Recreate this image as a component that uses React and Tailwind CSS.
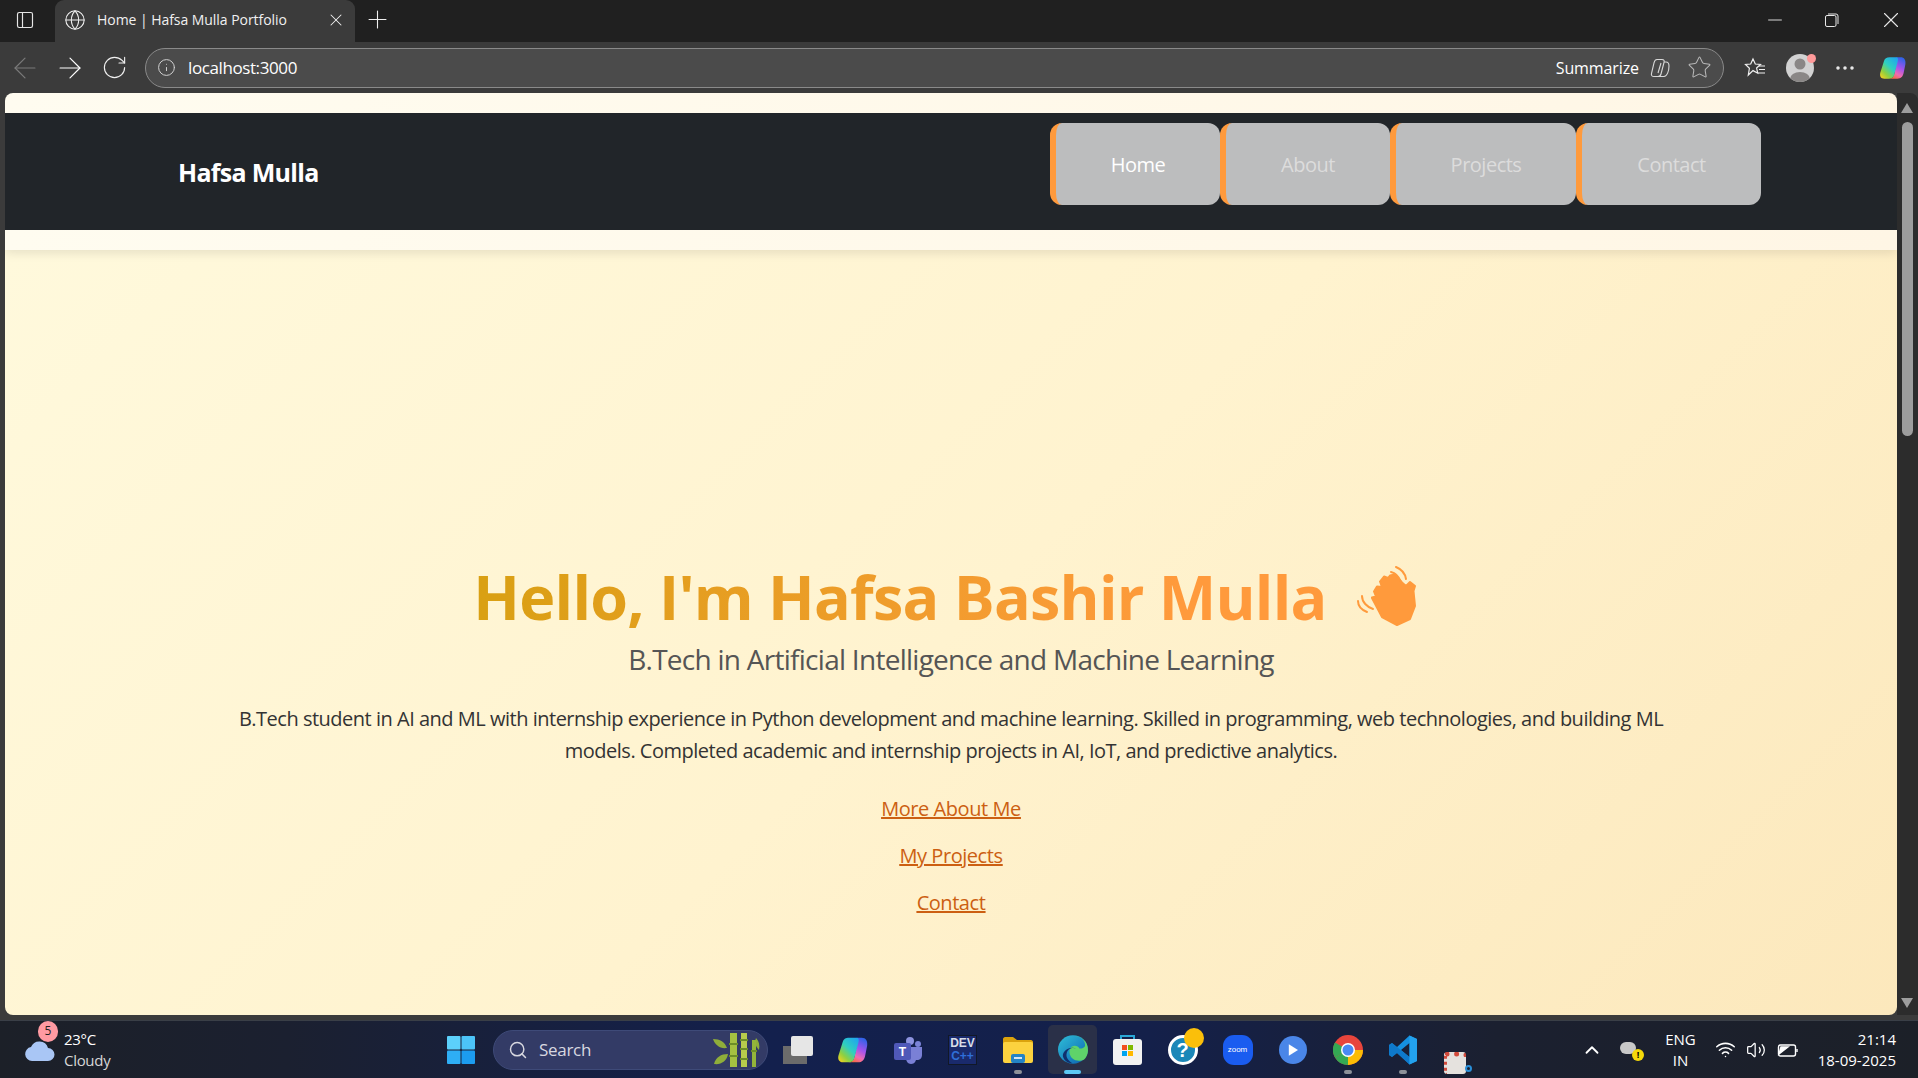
import React from 'react';
import { ArrowLeft, ArrowRight, RotateCw, Info, Globe, X, Plus, Minus, Star, MoreHorizontal, PanelLeft, Search, ChevronUp, Wifi, Volume2 } from 'lucide-react';

const navItems = [
  { label: 'Home', width: 'w-[170px]', text: 'text-white' },
  { label: 'About', width: 'w-[170px]', text: 'text-[#dcdcdc]' },
  { label: 'Projects', width: 'w-[186px]', text: 'text-[#dcdcdc]' },
  { label: 'Contact', width: 'w-[185px]', text: 'text-[#dcdcdc]' },
];

const CopilotIcon = ({ size = 26, id = 'cp' }) => (
  <svg width={size} height={size} viewBox="0 0 26 26">
    <defs>
      <linearGradient id={`${id}a`} x1="0.9" y1="0" x2="0.1" y2="1">
        <stop offset="0" stopColor="#1fa4f0" />
        <stop offset="0.45" stopColor="#2fd0c0" />
        <stop offset="0.75" stopColor="#8fd040" />
        <stop offset="1" stopColor="#f5d020" />
      </linearGradient>
      <linearGradient id={`${id}b`} x1="0.7" y1="0" x2="0.3" y2="1">
        <stop offset="0" stopColor="#2f63e8" />
        <stop offset="0.45" stopColor="#a553ec" />
        <stop offset="0.75" stopColor="#ef6bb0" />
        <stop offset="1" stopColor="#f76a40" />
      </linearGradient>
    </defs>
    <path d="M16 3h4c3.500 0 5 2.500 4.500 6.500L23 17c-.7 4-2.500 6-6 6H9c3 0 4.500-1.500 5.200-4.500L16.500 7c.3-2-.2-3-.5-4z" fill={`url(#${id}b)`} />
    <path d="M10 3h6c1.500 0 2 1.500 1.500 3.500L14.200 19c-.7 3-2.500 4-5.200 4H5c-3.500 0-4.500-2.500-3.800-5.500L4.500 7C5.200 4 7 3 10 3z" fill={`url(#${id}a)`} />
  </svg>
);

const WinIcon = () => (
  <svg width="30" height="30" viewBox="0 0 30 30">
    <rect x="1" y="1" width="13.500" height="13.500" rx="1" fill="#5cd0fb" />
    <rect x="15.500" y="1" width="13.500" height="13.500" rx="1" fill="#4cc4f8" />
    <rect x="1" y="15.500" width="13.500" height="13.500" rx="1" fill="#2eaef5" />
    <rect x="15.500" y="15.500" width="13.500" height="13.500" rx="1" fill="#1c9cf0" />
  </svg>
);

const Bamboo = () => (
  <svg width="50" height="34" viewBox="0 0 50 34">
    <path d="M1 6c7 0 12 3 14 9-7 1-12-3-14-9zM2 31c2-7 7-10 14-10-1 7-7 11-14 10z" fill="#8fae3a" />
    <path d="M44 5c3 3 4 7 3 12-3-3-5-7-3-12z" fill="#8fae3a" />
    <rect x="18" y="0" width="7" height="34" fill="#a5c241" />
    <rect x="29" y="0" width="6" height="34" fill="#b7cc4c" />
    <rect x="40" y="7" width="4" height="27" fill="#93b53a" />
    <path d="M17 11h9M17 23h9M28 7h8M28 16h8M28 26h8M39 18h6" stroke="#6d8f28" strokeWidth="2" />
  </svg>
);

const Gallery = () => (
  <div className="relative w-[30px] h-[28px]">
    <div className="absolute left-0 bottom-0 w-[24px] h-[18px] bg-[#6b6b6b]" />
    <div className="absolute right-0 top-0 w-[22px] h-[20px] rounded-[2px] bg-[#e6e6e6]" />
  </div>
);

const TeamsIcon = () => (
  <svg width="30" height="30" viewBox="0 0 30 30">
    <circle cx="25" cy="9" r="3" fill="#7b83d8" />
    <circle cx="17" cy="6" r="4" fill="#8d93e0" />
    <path d="M15 12h14v8c0 3-2 5-5 5h-1c-1 3-3 4-5 4-3 0-5-3-5-6z" fill="#7a80d6" />
    <rect x="1" y="8" width="17" height="17" rx="2" fill="#4f58b8" />
    <text x="9.500" y="21" textAnchor="middle" fontSize="12" fontWeight="700" fill="#fff" fontFamily="Liberation Sans, sans-serif">T</text>
  </svg>
);

const DevIcon = () => (
  <div className="flex flex-col items-center justify-center w-[29px] h-[30px] bg-[#1a2a6c] border border-[#111827] font-['Liberation_Sans',sans-serif] font-bold text-[12px] leading-[13px]">
    <span className="text-[#d8dde8]">DEV</span>
    <span className="text-[#2f6fd8]">C++</span>
  </div>
);

const FilesIcon = () => (
  <svg width="30" height="27" viewBox="0 0 30 27">
    <path d="M0 3c0-1 1-2 2-2h8l4 3h14c1 0 2 1 2 2v4H0z" fill="#dba30d" />
    <rect x="0" y="6" width="30" height="21" rx="2" fill="#fcd23f" />
    <rect x="8" y="18" width="14" height="9" rx="2" fill="#2484c6" />
    <rect x="11" y="21" width="8" height="2" fill="#fff" opacity="0.8" />
  </svg>
);

const EdgeIcon = () => (
  <svg width="30" height="31" viewBox="0 0 31 34" preserveAspectRatio="none">
    <defs>
      <linearGradient id="edg" x1="0" y1="0" x2="1" y2="1">
        <stop offset="0" stopColor="#2fbfd8" />
        <stop offset="1" stopColor="#0b5fb0" />
      </linearGradient>
    </defs>
    <circle cx="15.500" cy="17" r="15.500" fill="url(#edg)" />
    <path d="M31 18c0-9-6-16-15-16 6 0 12 4 12 10 0 3-3 4-6 4-1-3-5-4-8-2-3 3-3 9 1 13 3 3 9 3 12 1 2-2 4-6 4-10z" fill="#5fd36a" />
    <path d="M19 16c-4-2-9 0-10 5-1 4 1 8 6 11-5 0-9-3-10-8 0-6 7-11 14-8z" fill="#10306e" />
  </svg>
);

const StoreIcon = () => (
  <svg width="29" height="31" viewBox="0 0 29 31">
    <path d="M8 7V2h13v5" fill="none" stroke="#2aa8d8" strokeWidth="2" />
    <rect x="0" y="5" width="29" height="26" rx="3" fill="#f2f2f2" />
    <rect x="9" y="11" width="5" height="5" fill="#f25022" />
    <rect x="15" y="11" width="5" height="5" fill="#7fba00" />
    <rect x="9" y="17" width="5" height="5" fill="#00a4ef" />
    <rect x="15" y="17" width="5" height="5" fill="#ffb900" />
  </svg>
);

const HelpIcon = () => (
  <div className="relative w-[30px] h-[30px]">
    <div className="flex items-center justify-center w-[30px] h-[30px] rounded-full border-[3px] border-white bg-[#1b87b8] text-white font-bold text-[20px] leading-none font-['Liberation_Sans',sans-serif]">?</div>
    <div className="absolute right-[-6px] top-[-7px] w-[20px] h-[20px] rounded-full bg-[#fbbf0a]" />
  </div>
);

const ZoomIcon = () => (
  <div className="flex items-center justify-center w-[30px] h-[30px] rounded-[11px] bg-[#1a5cf0] text-white text-[8px] font-['Liberation_Sans',sans-serif]">zoom</div>
);

const PlayIcon = () => (
  <div className="flex items-center justify-center w-[28px] h-[28px] rounded-full bg-[#4a86e8]">
    <svg width="10" height="12" viewBox="0 0 12 14"><path d="M1 0l11 7-11 7z" fill="#fff" /></svg>
  </div>
);

const ChromeIcon = () => (
  <svg width="30" height="30" viewBox="0 0 30 30">
    <circle cx="15" cy="15" r="15" fill="#e8453c" />
    <path d="M15 15L2 22.500A15 15 0 0 1 2 7.500z" fill="#34a853" />
    <path d="M15 15l-13 7.500A15 15 0 0 0 15 30z" fill="#34a853" />
    <path d="M15 15h15A15 15 0 0 1 15 30z" fill="#fbbc05" />
    <circle cx="15" cy="15" r="7" fill="#fff" />
    <circle cx="15" cy="15" r="5.500" fill="#4a8af4" />
  </svg>
);

const VsCodeIcon = () => (
  <svg width="30" height="30" viewBox="0 0 30 30">
    <path fillRule="evenodd" d="M21.500.500L29 4v22l-7.500 3.500L9 18l-5 4-3-2v-10l3-2 5 4zM21.500 8L13 15l8.500 7z" fill="#1590e0" />
    <path d="M4 8L21.500 22v7.500L9 18l-5 4-3-2v-10z" fill="#0c72c4" opacity="0.75" />
    <path d="M21.500.500L29 4v22l-7.500 3.500z" fill="#23a2ee" />
  </svg>
);

const SnipIcon = () => (
  <div className="relative w-[28px] h-[22px] mt-[26px]">
    <div className="w-[22px] h-[22px] rounded-[3px] bg-[#e5e2de] border-t-[5px] border-l-[3px] border-dotted border-[#d24b3c]" />
    <div className="absolute right-0 bottom-[2px] w-[7px] h-[7px] rounded-full border-2 border-[#2a8fd8]" />
  </div>
);

const HandIcon = () => (
  <svg width="60" height="60" viewBox="0 0 60 60" fill="none">
    <path d="M15 32l10 19 15 8 13-6 5-13-1.500-15 1.500-5-5-4-4 4-4-3.500-7-8-5 1-2 2.500-4-1.500-4 5 2 5.500-5-.5-3 5 2 5-4 1z" fill="#ff9a3c" stroke="#ff9a3c" strokeWidth="2" strokeLinejoin="round" />
    <path d="M39 1c5 2 9 6 10 12M34 6c5 1 8 5 10 10" stroke="#ff9a3c" strokeWidth="2" strokeLinecap="round" />
    <path d="M1 35c0 5 4 9 9 11M5 30c0 6 5 11 11 13" stroke="#ff9a3c" strokeWidth="2" strokeLinecap="round" />
  </svg>
);

const taskIcons = [
  { icon: <Gallery />, dot: false },
  { icon: <CopilotIcon size={32} id="cpt" />, dot: false },
  { icon: <TeamsIcon />, dot: false },
  { icon: <DevIcon />, dot: false },
  { icon: <FilesIcon />, dot: true },
  { icon: <EdgeIcon />, dot: true, active: true },
  { icon: <StoreIcon />, dot: false },
  { icon: <HelpIcon />, dot: false },
  { icon: <ZoomIcon />, dot: false },
  { icon: <PlayIcon />, dot: false },
  { icon: <ChromeIcon />, dot: true },
  { icon: <VsCodeIcon />, dot: true },
  { icon: <SnipIcon />, dot: false },
];

const CopilotOutline = () => (
  <svg width="20" height="20" viewBox="0 0 20 20" fill="none" stroke="#d8d8d8" strokeWidth="1.100">
    <path d="M7 1.500h5c2 0 2.500 1 2 3L11 16c-.5 2-1.500 2.500-3 2.500H4c-2 0-3-1-2.500-3L4 5c.5-2.500 1.500-3.500 3-3.500z" />
    <path d="M14 4h2c2 0 3 1.500 3 4 0 5-2 10.500-5 10.500H8" />
    <path d="M11 5L8 15" />
  </svg>
);

const FavIcon = () => (
  <svg width="22" height="22" viewBox="0 0 22 22" fill="none" stroke="#f0f0f0" strokeWidth="1.200" className="ml-[20px]">
    <path d="M9 2l2.300 5 5.200.5-3.900 3.500 1.100 5.200L9 13.600 4.300 18l1.100-6.700L1.500 7.500l5.200-.5z" />
    <path d="M15 9h6M15 12.500h6M14 16h7" />
  </svg>
);

const BrowserChrome = () => (
  <div className="shrink-0">
    {/* Tab strip */}
    <div className="flex items-end h-[42px] bg-[#202020] pl-[15px]">
      <div className="flex items-center h-[42px] pb-[3px]">
        <PanelLeft size={20} strokeWidth={1.4} className="text-[#e6e6e6]" />
      </div>
      <div className="flex items-center w-[300px] h-[42px] ml-[20px] pl-[9px] pb-[3px] rounded-t-[9px] bg-[#3b3b3b] text-[#f0f0f0]">
        <Globe size={22} strokeWidth={1.15} />
        <span className="ml-[11px] text-[14px] tracking-[-0.05px]">Home | Hafsa Mulla Portfolio</span>
        <X size={20} strokeWidth={1.25} className="ml-auto mr-[9px]" />
      </div>
      <div className="flex items-center h-[42px] ml-[8px] pb-[3px]">
        <Plus size={29} strokeWidth={0.9} className="text-[#f0f0f0]" />
      </div>
      <div className="flex items-center gap-[39px] h-[42px] ml-auto pb-[3px] pr-[14px] text-[#e8e8e8]">
        <Minus size={22} strokeWidth={1} />
        <svg width="14" height="14" viewBox="0 0 14 14" fill="none" stroke="currentColor">
          <rect x="0.500" y="2.500" width="10.500" height="11" rx="1.500" />
          <path d="M3 1h8a2 2 0 0 1 2 2v8" />
        </svg>
        <X size={26} strokeWidth={1} />
      </div>
    </div>
    {/* Address bar */}
    <div className="flex items-center h-[51px] bg-[#3b3b3b] pl-[8px]">
      <ArrowLeft size={34} strokeWidth={0.85} className="text-[#7a7a7a]" />
      <ArrowRight size={34} strokeWidth={0.85} className="ml-[11px] text-white" />
      <RotateCw size={27} strokeWidth={1} className="ml-[14px] text-[#f0f0f0]" />
      <div className="flex items-center w-[1579px] h-[40px] ml-[17px] pl-[11px] pr-[11px] rounded-full border border-[#8a8a8a] bg-[#4b4b4b] text-white">
        <Info size={19} strokeWidth={1.25} className="text-[#d0d0d0]" />
        <span className="ml-[12px] text-[17px] tracking-[-0.4px]">localhost:3000</span>
        <span className="ml-auto text-[16px] tracking-[-0.1px]">Summarize</span>
        <div className="ml-[11px] flex">
          <CopilotOutline />
        </div>
        <Star size={25} strokeWidth={1} className="ml-[17px] text-[#b8b8b8]" />
      </div>
      <FavIcon />
      <div className="relative ml-[20px] w-[28px] h-[28px]">
        <div className="w-[28px] h-[28px] rounded-full bg-[#d2d2d2] overflow-hidden">
          <svg width="28" height="28" viewBox="0 0 28 28">
            <circle cx="14" cy="10" r="5.500" fill="#8a8786" />
            <ellipse cx="14" cy="25" rx="10" ry="7" fill="#8a8786" />
          </svg>
        </div>
        <div className="absolute right-[-2px] top-0 w-[9px] h-[9px] rounded-full bg-[#ff9a9a]" />
      </div>
      <MoreHorizontal size={24} strokeWidth={1.5} className="ml-[19px] text-[#f0f0f0]" />
      <div className="ml-[22px] flex"><CopilotIcon size={28} id="cpn" /></div>
    </div>
  </div>
);

const Hero = () => (
  <main className="flex-1 flex flex-col items-center pt-[308px] bg-[linear-gradient(135deg,#fff9dc_0%,#fff3cf_50%,#fce8bc_100%)]">
    <h1 className="flex items-center h-[76px] mr-[12px] text-[61px] font-bold leading-none tracking-[-0.76px] text-transparent bg-clip-text bg-[linear-gradient(90deg,#d9a013,#ff9a3c_75%)]">
      Hello, I'm Hafsa Bashir Mulla
      <span className="ml-[30px] mb-[1px]"><HandIcon /></span>
    </h1>
    <h2 className="mt-[4px] text-[28px] leading-[42px] tracking-[-0.73px] text-[#555555]">B.Tech in Artificial Intelligence and Machine Learning</h2>
    <p className="mt-[23px] w-[1450px] text-center text-[20px] leading-[32px] tracking-[-0.49px] text-[#333333]">
      B.Tech student in AI and ML with internship experience in Python development and machine learning. Skilled in programming, web technologies, and building ML models. Completed academic and internship projects in AI, IoT, and predictive analytics.
    </p>
    <div className="mt-[26px] flex flex-col items-center gap-[15px] text-[20px] leading-[32px] tracking-[-0.45px] text-[#cc5f12] underline">
      <a href="#about">More About Me</a>
      <a href="#projects">My Projects</a>
      <a href="#contact">Contact</a>
    </div>
  </main>
);

const Page = () => (
  <div className="flex flex-col w-[1892px] shrink-0 rounded-[8px] overflow-hidden">
    <div className="relative z-10 shrink-0 h-[157px] pt-[20px] pb-[20px] bg-[linear-gradient(90deg,#fffcf0,#fff6e5)] shadow-[0_3px_10px_rgba(0,0,0,0.1)]">
      <header className="flex items-start justify-between h-[117px] bg-[#212529] pt-[10px] pl-[173px] pr-[136px]">
        <span className="mt-[28px] text-[25px] leading-[42px] font-bold tracking-[-0.7px] text-white">Hafsa Mulla</span>
        <nav className="flex">
          {navItems.map((item) => (
            <a key={item.label} href="#" className={`flex items-center justify-center h-[82px] ${item.width} pt-[2px] rounded-[12px] border-l-[6px] border-[#ff9a3c] bg-[#bcbdbe] text-[20px] tracking-[-0.5px] ${item.text}`}>
              {item.label}
            </a>
          ))}
        </nav>
      </header>
    </div>
    <Hero />
  </div>
);

const Scrollbar = () => (
  <div className="flex-1 flex flex-col items-center pt-[10px] pr-[1px] rounded-tr-[8px] bg-[#2c2c2c]">
    <div className="w-0 h-0 border-x-[6px] border-x-transparent border-b-[10px] border-b-[#9d9d9d]" />
    <div className="mt-[9px] w-[11px] h-[314px] rounded-full bg-[#9d9d9d]" />
    <div className="mt-auto mb-[7px] w-0 h-0 border-x-[6px] border-x-transparent border-t-[10px] border-t-[#9d9d9d]" />
  </div>
);

const Taskbar = () => (
  <div className="shrink-0 flex items-center h-[58px] border-t border-[#3a3f47] bg-[linear-gradient(90deg,#1c2028_0%,#1b2030_15%,#13204d_40%,#14204a_60%,#1b2030_78%,#1c2028_100%)] text-white">
    <div className="relative flex items-center w-[446px] pl-[64px]">
      <svg width="31" height="20" viewBox="0 0 31 20" className="absolute left-[24px] top-[12px]">
        <path d="M8 20a7 7 0 0 1-1-13.900A9 9 0 0 1 24 7a6.500 6.500 0 0 1 0 13z" fill="#a9c6f5" />
      </svg>
      <div className="absolute left-[38px] top-[-8px] flex items-center justify-center w-[20px] h-[21px] rounded-full bg-[#ff9aa2] text-[12px] text-[#222222]">5</div>
      <div className="flex flex-col text-[15px] leading-[21px] tracking-[-0.3px]">
        <span>23°C</span>
        <span className="text-[#d6d6d6]">Cloudy</span>
      </div>
    </div>
    <WinIcon />
    <div className="flex items-center w-[275px] h-[40px] ml-[17px] pl-[14px] pr-[5px] rounded-full border border-[#3e4a78] bg-[#333b66] text-[#d8d8e0]">
      <Search size={20} strokeWidth={1.75} />
      <span className="ml-[11px] text-[17px] tracking-[-0.3px]">Search</span>
      <div className="ml-auto flex"><Bamboo /></div>
    </div>
    <div className="flex ml-[2px]">
      {taskIcons.map((t, i) => (
        <div key={i} className="relative flex items-center justify-center w-[55px] h-[49px]">
          {t.active && <div className="absolute left-[3px] top-0 w-[49px] h-[49px] rounded-[5px] bg-[#2a3048]" />}
          <div className="relative flex">{t.icon}</div>
          {t.dot && <div className={`absolute bottom-[0px] h-[4px] rounded-full ${t.active ? 'w-[17px] bg-[#5cc8f5]' : 'w-[8px] bg-[#8d9199]'}`} />}
        </div>
      ))}
    </div>
    <div className="flex items-center ml-auto pr-[22px]">
      <ChevronUp size={22} strokeWidth={2} className="mr-[17px]" />
      <div className="relative w-[22px] h-[16px] mr-[20px]">
        <div className="w-[16px] h-[12px] rounded-full bg-[#c8c8c8]" />
        <div className="absolute right-[-2px] bottom-[-3px] flex items-center justify-center w-[12px] h-[12px] rounded-full bg-[#f5d90a] text-[9px] font-bold leading-none text-black">!</div>
      </div>
      <div className="flex flex-col items-center w-[37px] text-[15px] leading-[21px]">
        <span>ENG</span>
        <span>IN</span>
      </div>
      <Wifi size={21} strokeWidth={1.75} className="ml-[16px]" />
      <Volume2 size={20} strokeWidth={1.5} className="ml-[10px]" />
      <svg width="22" height="16" viewBox="0 0 22 16" fill="none" stroke="#fff" strokeWidth="1.400" className="ml-[11px]">
        <rect x="1.500" y="3" width="17" height="11" rx="2" />
        <path d="M20 7v3" />
        <path d="M2 12l9-7H4z" fill="#fff" />
      </svg>
      <div className="flex flex-col items-end w-[79px] ml-[18px] text-[15px] leading-[21px] tracking-[0px]">
        <span>21:14</span>
        <span>18-09-2025</span>
      </div>
    </div>
  </div>
);

export default function App() {
  return (
    <div className="flex flex-col w-[1918px] h-[1078px] overflow-hidden bg-[#3b3b3b] font-['Open_Sans',sans-serif]">
      <BrowserChrome />
      <div className="flex-1 flex min-h-0 pl-[5px] pb-[5px]">
        <Page />
        <Scrollbar />
      </div>
      <Taskbar />
    </div>
  );
}
